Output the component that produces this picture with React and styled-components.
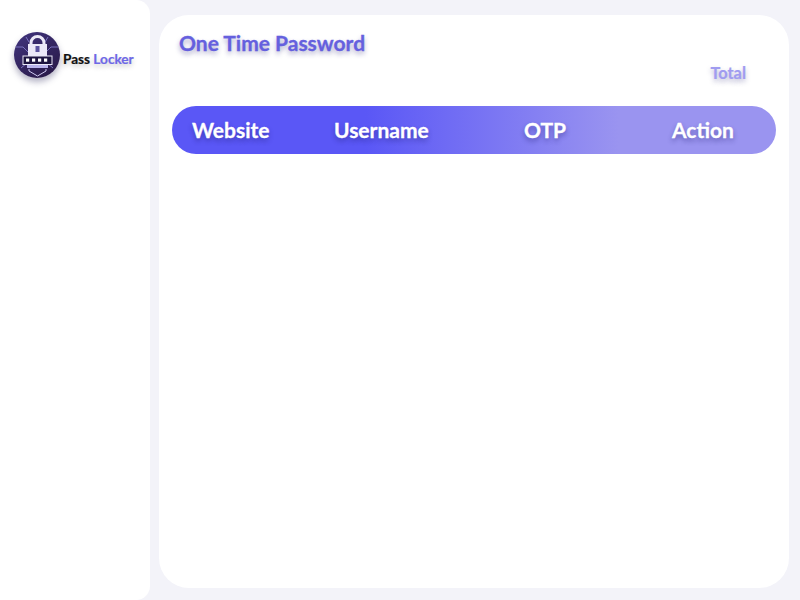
import React from "react";
import styled, { createGlobalStyle } from "styled-components";

const Global = createGlobalStyle`
  html, body { margin: 0; padding: 0; height: 100%; }
  body { background: #f3f3f9; font-family: "Lato", "Liberation Sans", sans-serif; overflow: hidden; }
  #root { height: 100%; }
`;

const Shell = styled.div`
  display: flex;
  width: 800px;
  height: 600px;
  box-sizing: border-box;
`;

const Sidebar = styled.aside`
  width: 150px;
  height: 600px;
  flex: none;
  background: #fff;
  border-radius: 0 14px 14px 0;
  box-sizing: border-box;
  padding: 32px 0 0 14px;
`;

const Brand = styled.div`
  display: flex;
  align-items: center;
  gap: 3px;
`;

const LogoWrap = styled.div`
  width: 46px;
  height: 46px;
  flex: none;
  border-radius: 50%;
  box-shadow: 0 4px 6px rgba(40, 36, 90, 0.35);
`;

const BrandName = styled.div`
  padding-top: 7px;
  font-size: 13.6px;
  font-weight: 700;
  color: #111;
  white-space: nowrap;
  -webkit-text-stroke: 0.2px currentColor;
  text-shadow: 0 3px 5px rgba(0, 0, 0, 0.22);
  span { color: #6e68e6; }
`;

const Main = styled.main`
  width: 630px;
  height: 573px;
  margin: 15px 0 0 9px;
  flex: none;
  background: #fff;
  border-radius: 30px;
  box-sizing: border-box;
  padding: 15px 13px 0;
`;

const Title = styled.h1`
  margin: 0 0 0 7px;
  font-size: 21px;
  line-height: 26px;
  font-weight: 700;
  color: #6560de;
  -webkit-text-stroke: 0.3px currentColor;
  text-shadow: 0 3px 5px rgba(40, 36, 120, 0.4);
`;

const TotalRow = styled.div`
  display: flex;
  justify-content: flex-end;
  padding-right: 30px;
  margin-top: 7px;
`;

const Total = styled.span`
  font-size: 16.4px;
  line-height: 20px;
  font-weight: 700;
  color: #a09cf0;
  -webkit-text-stroke: 0.2px currentColor;
  text-shadow: 0 3px 5px rgba(40, 36, 120, 0.35);
`;

const HeaderBar = styled.div`
  display: grid;
  grid-template-columns: 142px 190px 148px 1fr;
  align-items: center;
  height: 48px;
  box-sizing: border-box;
  margin-top: 23px;
  padding: 0 0 2px 20px;
  border-radius: 24px;
  background: linear-gradient(90deg, #5a57f6 0%, #5a57f6 32%, #9a94f0 74%, #9a94f0 100%);
`;

const HeaderCell = styled.div`
  font-size: 21px;
  font-weight: 700;
  color: #fff;
  -webkit-text-stroke: 0.3px currentColor;
  text-shadow: 0 3px 5px rgba(30, 26, 110, 0.45);
`;

const Logo = () => (
  <svg width="46" height="46" viewBox="0 0 46 46" style={{ display: "block" }}>
    <defs>
      <linearGradient id="disc" x1="0" y1="0" x2="0.7" y2="1">
        <stop offset="0" stopColor="#41357f" />
        <stop offset="1" stopColor="#2a1a4a" />
      </linearGradient>
    </defs>
    <circle cx="23" cy="23" r="23" fill="url(#disc)" />
    <g fill="none" stroke="#8c86d6" strokeWidth="0.8">
      <path d="M2 15h7l5 5M44 15h-7l-5 5M7 36l6-5M39 36l-6-5" />
      <path d="M12 5l3 5M34 5l-3 5" />
    </g>
    <path d="M17 15v-4a6.500 6.500 0 0 1 13 0v4" fill="none" stroke="#ece9f8" strokeWidth="3" />
    <rect x="14" y="12" width="19" height="12" fill="#ece9f8" />
    <path d="M21.500 14h4v6h-4z" fill="#5c53a0" />
    <rect x="9" y="24" width="29" height="8.500" fill="#1d1440" stroke="#ece9f8" strokeWidth="1" />
    <g fill="#fff">
      <rect x="12" y="26.500" width="3.200" height="3.200" />
      <rect x="18" y="26.500" width="3.200" height="3.200" />
      <rect x="24" y="26.500" width="3.200" height="3.200" />
      <rect x="30" y="26.500" width="3.200" height="3.200" />
    </g>
    <rect x="13" y="33" width="21" height="3" fill="#b9b3ec" />
    <path d="M15 37v2l8.500 5 8.500-5v-2" fill="none" stroke="#cfcaf2" strokeWidth="1" />
  </svg>
);

export default function App() {
  return (
    <Shell>
      <Global />
      <Sidebar>
        <Brand>
          <LogoWrap><Logo /></LogoWrap>
          <BrandName>Pass <span>Locker</span></BrandName>
        </Brand>
      </Sidebar>
      <Main>
        <Title>One Time Password</Title>
        <TotalRow><Total>Total</Total></TotalRow>
        <HeaderBar>
          <HeaderCell>Website</HeaderCell>
          <HeaderCell>Username</HeaderCell>
          <HeaderCell>OTP</HeaderCell>
          <HeaderCell>Action</HeaderCell>
        </HeaderBar>
      </Main>
    </Shell>
  );
}
